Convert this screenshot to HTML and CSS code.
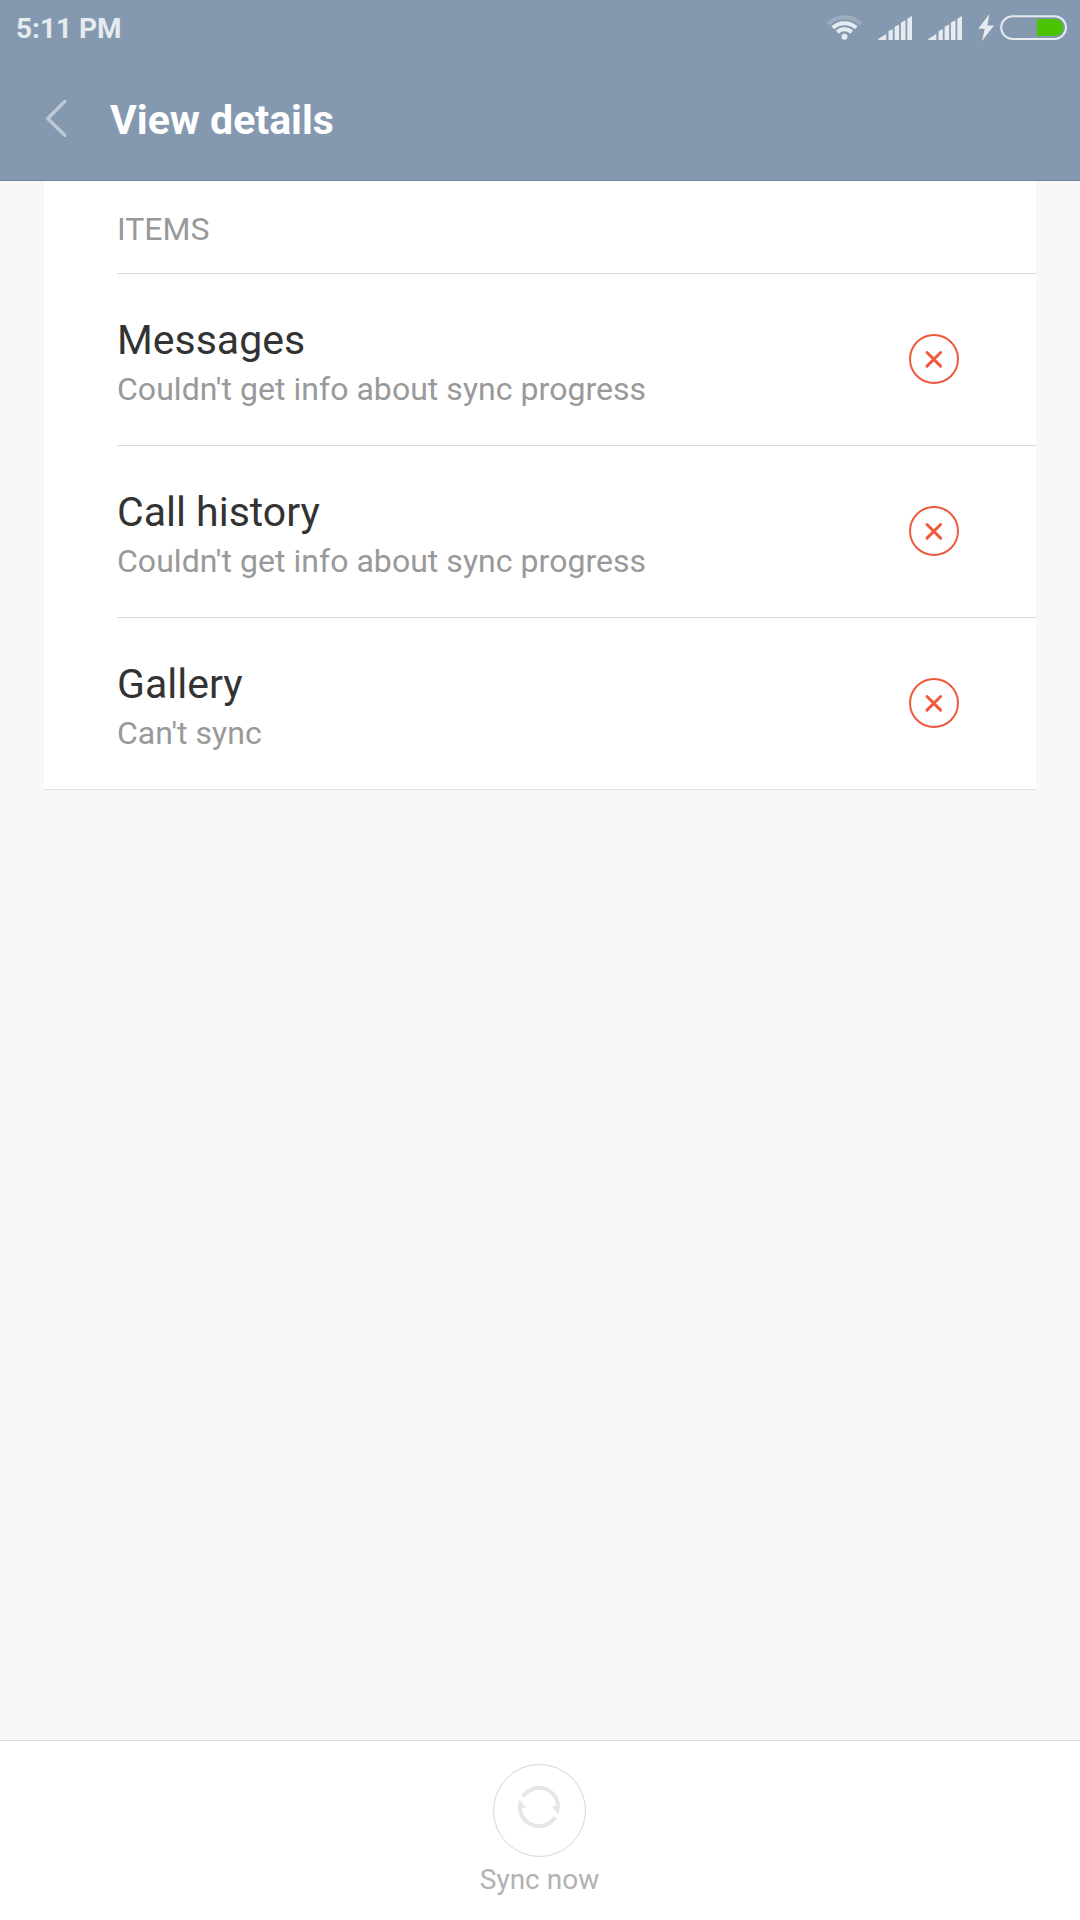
FILE: index.html
```html
<!DOCTYPE html>
<html lang="en">
<head>
    <meta charset="utf-8">
    <title>View details</title>
    <meta name="viewport" content="width=device-width, initial-scale=1">
    <link rel="stylesheet" href="styles.css">
</head>
<body>
    <header class="header">
        <div class="status-bar">
            <span class="clock">5:11 PM</span>
            <svg class="status-icons" width="244" height="32" viewBox="824 12 244 32" aria-hidden="true">
                <defs>
                    <g id="signal">
                        <path d="M0 40V39L8 34V40Z"/>
                        <path d="M10.2 31.2L14.5 29V40H10.2Z"/>
                        <path d="M16.3 26.7L20.8 24.4V40H16.3Z"/>
                        <path d="M22.6 22.5L27.2 20.2V40H22.6Z"/>
                        <path d="M29 18.8L33.7 16V40H29Z"/>
                    </g>
                </defs>
                <g class="wifi">
                    <path class="wifi-weak" d="M828.3 24A23 23 0 0 1 860.7 24"/>
                    <path d="M832.8 27.8A17 17 0 0 1 856.2 27.8"/>
                    <path d="M837.3 32.2A10.5 10.5 0 0 1 851.7 32.2"/>
                    <circle cx="844.5" cy="36.7" r="3"/>
                </g>
                <use href="#signal" x="878.3"/>
                <use href="#signal" x="928.3"/>
                <path d="M989.3 14L978.3 28.8H984.7L982 41L994 25.5H987.5Z"/>
                <rect class="battery" x="1001.2" y="16.2" width="64.8" height="22.8" rx="11.4"/>
                <path class="battery-level" d="M1037 19H1055A8.5 8.5 0 0 1 1055 36H1037Z"/>
            </svg>
        </div>
        <div class="title-bar">
            <svg class="back" width="24" height="40" viewBox="0 0 24 40" aria-hidden="true">
                <path d="M20.8 3.5L3.7 20.5L20.8 37.3"/>
            </svg>
            <h1>View details</h1>
        </div>
    </header>

    <main>
        <section class="card">
            <h2>ITEMS</h2>
            <ul class="items">
                <li>
                    <div class="item-text">
                        <p class="item-name">Messages</p>
                        <p class="item-status">Couldn't get info about sync progress</p>
                    </div>
                    <svg class="error-icon" width="50" height="50" viewBox="0 0 50 50" aria-hidden="true">
                        <circle cx="25" cy="25" r="24"/>
                        <path d="M18 18.5L31.6 32.1M31.6 18.5L18 32.1"/>
                    </svg>
                </li>
                <li>
                    <div class="item-text">
                        <p class="item-name">Call history</p>
                        <p class="item-status">Couldn't get info about sync progress</p>
                    </div>
                    <svg class="error-icon" width="50" height="50" viewBox="0 0 50 50" aria-hidden="true">
                        <circle cx="25" cy="25" r="24"/>
                        <path d="M18 18.5L31.6 32.1M31.6 18.5L18 32.1"/>
                    </svg>
                </li>
                <li>
                    <div class="item-text">
                        <p class="item-name">Gallery</p>
                        <p class="item-status">Can't sync</p>
                    </div>
                    <svg class="error-icon" width="50" height="50" viewBox="0 0 50 50" aria-hidden="true">
                        <circle cx="25" cy="25" r="24"/>
                        <path d="M18 18.5L31.6 32.1M31.6 18.5L18 32.1"/>
                    </svg>
                </li>
            </ul>
        </section>
    </main>

    <footer class="bottom-bar">
        <button class="sync-btn">
            <svg width="93" height="93" viewBox="0 0 93 93" aria-hidden="true">
                <circle class="ring" cx="46.5" cy="46.5" r="46"/>
                <path class="arc" d="M30 32.6A19 19 0 0 1 65 43"/>
                <path class="arc" d="M62 53.4A19 19 0 0 1 27 43"/>
                <path class="arrow" d="M67 42.3L65.6 50.6L58.5 42.3Z"/>
                <path class="arrow" d="M25 43.8L26.2 35.3L33.2 43.8Z"/>
            </svg>
            <span>Sync now</span>
        </button>
    </footer>
</body>
</html>
```

FILE: styles.css
```css
* {
    box-sizing: border-box;
}
body {
    display: flex;
    flex-direction: column;
    min-height: 1920px;
    margin: 0;
    background: #f8f8f8;
    color: #333;
    font-family: Roboto, sans-serif;
}
h1, h2, p, ul {
    margin: 0;
    padding: 0;
}
.header {
    height: 181px;
    background: #8499b0;
    border-bottom: 1px solid #6f849c;
}
.status-bar {
    display: flex;
    justify-content: space-between;
    height: 60px;
    padding: 12px 12px 0 16px;
}
.clock {
    color: #e6ebef;
    font-size: 28px;
    font-weight: 700;
    line-height: 33px;
}
.status-icons {
    fill: #e6ebef;
}
.wifi path {
    fill: none;
    stroke: #e6ebef;
    stroke-width: 4;
}
.wifi .wifi-weak {
    stroke: #9badbf;
}
.status-icons .battery {
    fill: none;
    stroke: #e6ebef;
    stroke-width: 2;
}
.status-icons .battery-level {
    fill: #48c400;
}
.title-bar {
    display: flex;
    align-items: center;
    height: 120px;
    padding-left: 44px;
}
.back {
    margin-top: -4px;
    margin-right: 42px;
    fill: none;
    stroke: #bdc9d5;
    stroke-width: 3.4;
    stroke-linecap: round;
    stroke-linejoin: round;
}
h1 {
    color: #fff;
    font-size: 41px;
    font-weight: 700;
    line-height: 48px;
}
main {
    flex: 1;
    padding: 0 44px;
}
.card {
    padding-left: 73px;
    background: #fff;
    border-bottom: 1px solid #e0e0e0;
}
h2 {
    height: 92px;
    padding-top: 29px;
    color: #999;
    font-size: 32px;
    font-weight: 400;
    line-height: 38px;
}
.items {
    list-style: none;
}
.items li {
    display: flex;
    align-items: center;
    justify-content: space-between;
    height: 172px;
    padding-right: 77px;
    border-top: 1px solid #d9d9d9;
}
.item-text {
    padding-top: 5px;
}
.item-name {
    font-size: 41px;
    line-height: 49px;
}
.item-status {
    margin-top: 5px;
    color: #999;
    font-size: 32px;
    letter-spacing: 0.04px;
    line-height: 38px;
}
.error-icon {
    margin-bottom: 1px;
    fill: none;
    stroke: #ed5a3e;
    stroke-width: 2;
    stroke-linecap: round;
}
.error-icon path {
    stroke-width: 3;
}
.bottom-bar {
    display: flex;
    justify-content: center;
    height: 180px;
    padding-right: 1px;
    background: #fff;
    border-top: 1px solid #d9d9d9;
}
.sync-btn {
    display: flex;
    flex-direction: column;
    align-items: center;
    padding: 23px 0 0;
    background: none;
    border: none;
    color: #b2b2b2;
    font-family: inherit;
    font-size: 28px;
    line-height: 33px;
}
.sync-btn span {
    margin-top: 6px;
}
.ring {
    fill: none;
    stroke: #d6d6d6;
}
.arc {
    fill: none;
    stroke: #e6e6e6;
    stroke-width: 4;
}
.arrow {
    fill: #e6e6e6;
}
```
